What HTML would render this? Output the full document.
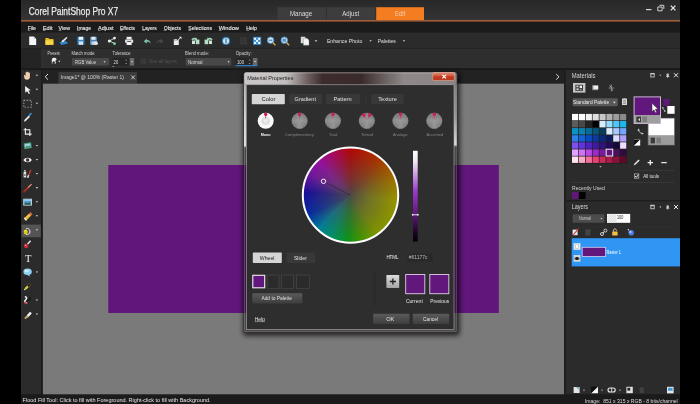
<!DOCTYPE html>
<html><head><meta charset="utf-8"><title>Corel PaintShop Pro X7</title>
<style>
html,body{margin:0;padding:0;background:#000;overflow:hidden}
body{width:700px;height:404px;font-family:"Liberation Sans",sans-serif}
svg{display:block;font-family:"Liberation Sans",sans-serif;filter:blur(.45px);overflow:visible}
text{white-space:pre}
</style></head><body>
<svg width="700" height="404" viewBox="0 0 700 404">
<defs>
<linearGradient id="gTitle" x1="0" y1="0" x2="0" y2="1"><stop offset="0" stop-color="#282828"/><stop offset="1" stop-color="#343434"/></linearGradient>
<linearGradient id="gBtn" x1="0" y1="0" x2="0" y2="1"><stop offset="0" stop-color="#5a5a5a"/><stop offset="1" stop-color="#3e3e3e"/></linearGradient>
<pattern id="chk" width="2.4" height="2.4" patternUnits="userSpaceOnUse"><rect width="2.4" height="2.4" fill="#fff"/><rect width="1.2" height="1.2" fill="#cfcfcf"/><rect x="1.2" y="1.2" width="1.2" height="1.2" fill="#cfcfcf"/></pattern>
<filter id="sh" x="-10%" y="-10%" width="120%" height="120%"><feGaussianBlur stdDeviation="2.5"/></filter>
<linearGradient id="gDT" x1="243.5" y1="0" x2="457.2" y2="0" gradientUnits="userSpaceOnUse"><stop offset="0" stop-color="#cbc7c7"/><stop offset="0.2" stop-color="#c2bebe"/><stop offset="0.3" stop-color="#6e6060"/><stop offset="0.37" stop-color="#3c2c2c"/><stop offset="0.55" stop-color="#3a2a2a"/><stop offset="0.66" stop-color="#6a6060"/><stop offset="0.75" stop-color="#8e8888"/><stop offset="1" stop-color="#8a8484"/></linearGradient>
<linearGradient id="gClose" x1="0" y1="0" x2="0" y2="1"><stop offset="0" stop-color="#e08a70"/><stop offset="0.45" stop-color="#d0553a"/><stop offset="0.5" stop-color="#c23a1e"/><stop offset="1" stop-color="#b83a20"/></linearGradient>
<clipPath id="cpOut"><path clip-rule="evenodd" d="M200 40H500V370H200ZM243.5 72.9H457.2V332.3H243.5Z"/></clipPath>
<linearGradient id="gHL" x1="0" y1="84.8" x2="0" y2="148" gradientUnits="userSpaceOnUse"><stop offset="0" stop-color="#fff" stop-opacity=".55"/><stop offset="0.6" stop-color="#fff" stop-opacity=".75"/><stop offset="0.96" stop-color="#fff" stop-opacity=".8"/><stop offset="1" stop-color="#fff" stop-opacity="0"/></linearGradient>
<linearGradient id="gHR" x1="0" y1="84.8" x2="0" y2="147" gradientUnits="userSpaceOnUse"><stop offset="0" stop-color="#fff" stop-opacity=".3"/><stop offset="0.5" stop-color="#fff" stop-opacity=".42"/><stop offset="0.96" stop-color="#fff" stop-opacity=".8"/><stop offset="1" stop-color="#fff" stop-opacity="0"/></linearGradient>
<radialGradient id="gMono"><stop offset="0" stop-color="#f4f4f4"/><stop offset="0.45" stop-color="#dcdcdc"/><stop offset="0.6" stop-color="#f8f8f8"/><stop offset="1" stop-color="#ffffff"/></radialGradient>
<radialGradient id="gHar"><stop offset="0" stop-color="#9c9c9c"/><stop offset="0.7" stop-color="#888888"/><stop offset="1" stop-color="#7c7c7c"/></radialGradient>
<linearGradient id="gMk" x1="0" y1="0" x2="0" y2="1"><stop offset="0" stop-color="#cc1f58"/><stop offset="0.5" stop-color="#cc1f58" stop-opacity=".8"/><stop offset="1" stop-color="#cc1f58" stop-opacity="0"/></linearGradient>
<linearGradient id="gBr" x1="0" y1="0" x2="0" y2="1"><stop offset="0" stop-color="#ffffff"/><stop offset="0.12" stop-color="#f0e6f6"/><stop offset="0.45" stop-color="#9a38c8"/><stop offset="0.7" stop-color="#61177c"/><stop offset="0.9" stop-color="#1a0624"/><stop offset="1" stop-color="#000000"/></linearGradient>
<linearGradient id="gPlus" x1="0" y1="0" x2="0" y2="1"><stop offset="0" stop-color="#dedede"/><stop offset="1" stop-color="#a4a4a4"/></linearGradient>
</defs>
<rect x="-4.00" y="-4.00" width="708.00" height="412.00" fill="#000" />
<rect x="21.00" y="-4.00" width="659.00" height="24.00" fill="#282828" />
<rect x="21.00" y="0.00" width="659.00" height="20.00" fill="url(#gTitle)" />
<text x="28.70" y="15.00" font-size="10.9" fill="#ececec" textLength="89.50" lengthAdjust="spacingAndGlyphs" stroke="#ececec" stroke-width=".25">Corel PaintShop Pro X7</text>
<rect x="277.50" y="7.20" width="48.30" height="13.00" fill="#3d3d3d" />
<rect x="327.00" y="7.20" width="48.20" height="13.00" fill="#3d3d3d" />
<rect x="376.20" y="7.20" width="47.80" height="13.20" fill="#f47d22" />
<text x="290.00" y="16.26" font-size="6.3" fill="#dcdcdc" textLength="22.20" lengthAdjust="spacingAndGlyphs" >Manage</text>
<text x="342.30" y="16.26" font-size="6.3" fill="#dcdcdc" textLength="16.80" lengthAdjust="spacingAndGlyphs" >Adjust</text>
<text x="395.00" y="16.26" font-size="6.3" fill="#f6d2b4" textLength="10.30" lengthAdjust="spacingAndGlyphs" >Edit</text>
<rect x="21.00" y="20.00" width="659.00" height="1.80" fill="#a05e3a" />
<rect x="646.00" y="9.00" width="5.40" height="1.20" fill="#d8d8d8" />
<path d="M659.5 5.3h4.3v3.6M657.8 7h4.3v3.8h-4.3z" fill="none" stroke="#d0d0d0" stroke-width="1"/>
<path d="M670.8 5.6l4.6 4.8M675.4 5.6l-4.6 4.8" stroke="#e8e8e8" stroke-width="1.3" fill="none"/>
<rect x="21.00" y="21.80" width="659.00" height="10.40" fill="#1b1b1b" />
<text x="27.70" y="29.58" font-size="5.8" fill="#ececec" textLength="8.30" lengthAdjust="spacingAndGlyphs" stroke="#ececec" stroke-width=".12">File</text>
<line x1="27.70" y1="30.40" x2="30.50" y2="30.40" stroke="#cfcfcf" stroke-width="0.55" />
<text x="42.80" y="29.58" font-size="5.8" fill="#ececec" textLength="9.80" lengthAdjust="spacingAndGlyphs" stroke="#ececec" stroke-width=".12">Edit</text>
<line x1="42.80" y1="30.40" x2="45.60" y2="30.40" stroke="#cfcfcf" stroke-width="0.55" />
<text x="58.60" y="29.58" font-size="5.8" fill="#ececec" textLength="11.40" lengthAdjust="spacingAndGlyphs" stroke="#ececec" stroke-width=".12">View</text>
<line x1="58.60" y1="30.40" x2="61.40" y2="30.40" stroke="#cfcfcf" stroke-width="0.55" />
<text x="77.00" y="29.58" font-size="5.8" fill="#ececec" textLength="14.00" lengthAdjust="spacingAndGlyphs" stroke="#ececec" stroke-width=".12">Image</text>
<line x1="77.00" y1="30.40" x2="79.80" y2="30.40" stroke="#cfcfcf" stroke-width="0.55" />
<text x="98.00" y="29.58" font-size="5.8" fill="#ececec" textLength="15.50" lengthAdjust="spacingAndGlyphs" stroke="#ececec" stroke-width=".12">Adjust</text>
<line x1="98.00" y1="30.40" x2="100.80" y2="30.40" stroke="#cfcfcf" stroke-width="0.55" />
<text x="120.00" y="29.58" font-size="5.8" fill="#ececec" textLength="15.00" lengthAdjust="spacingAndGlyphs" stroke="#ececec" stroke-width=".12">Effects</text>
<line x1="120.00" y1="30.40" x2="122.80" y2="30.40" stroke="#cfcfcf" stroke-width="0.55" />
<text x="142.30" y="29.58" font-size="5.8" fill="#ececec" textLength="14.30" lengthAdjust="spacingAndGlyphs" stroke="#ececec" stroke-width=".12">Layers</text>
<line x1="142.30" y1="30.40" x2="145.10" y2="30.40" stroke="#cfcfcf" stroke-width="0.55" />
<text x="163.80" y="29.58" font-size="5.8" fill="#ececec" textLength="17.20" lengthAdjust="spacingAndGlyphs" stroke="#ececec" stroke-width=".12">Objects</text>
<line x1="163.80" y1="30.40" x2="166.60" y2="30.40" stroke="#cfcfcf" stroke-width="0.55" />
<text x="188.30" y="29.58" font-size="5.8" fill="#ececec" textLength="23.70" lengthAdjust="spacingAndGlyphs" stroke="#ececec" stroke-width=".12">Selections</text>
<line x1="188.30" y1="30.40" x2="191.10" y2="30.40" stroke="#cfcfcf" stroke-width="0.55" />
<text x="218.70" y="29.58" font-size="5.8" fill="#ececec" textLength="20.30" lengthAdjust="spacingAndGlyphs" stroke="#ececec" stroke-width=".12">Window</text>
<line x1="218.70" y1="30.40" x2="221.50" y2="30.40" stroke="#cfcfcf" stroke-width="0.55" />
<text x="246.30" y="29.58" font-size="5.8" fill="#ececec" textLength="10.70" lengthAdjust="spacingAndGlyphs" stroke="#ececec" stroke-width=".12">Help</text>
<line x1="246.30" y1="30.40" x2="249.10" y2="30.40" stroke="#cfcfcf" stroke-width="0.55" />
<rect x="21.00" y="32.20" width="659.00" height="16.10" fill="#2b2b2b" />
<rect x="21.00" y="48.30" width="659.00" height="19.70" fill="#242424" />
<rect x="41.60" y="48.30" width="638.40" height="19.70" fill="#2e2e2e" />
<rect x="41.60" y="48.30" width="0.80" height="19.70" fill="#3a3a3a" />
<rect x="21.00" y="47.90" width="659.00" height="0.70" fill="#232323" />
<rect x="21.00" y="68.00" width="659.00" height="1.80" fill="#1c1c1c" />
<rect x="21.00" y="69.80" width="659.00" height="13.80" fill="#222222" />
<rect x="58.40" y="72.00" width="78.60" height="11.60" fill="#3c3c3c" />
<text x="60.60" y="79.22" font-size="6.2" fill="#d8d8d8" textLength="63.40" lengthAdjust="spacingAndGlyphs" >Image1* @ 100% (Raster 1)</text>
<path d="M131.3 75.5l3.6 3.8M134.9 75.5l-3.6 3.8" stroke="#dedede" stroke-width="0.9" fill="none"/>
<path d="M48 74l-2.8 2.8L48 79.6" stroke="#e0e0e0" stroke-width="1" fill="none"/>
<path d="M556.2 74l2.8 2.8l-2.8 2.8" stroke="#e0e0e0" stroke-width="1" fill="none"/>
<rect x="42.60" y="83.60" width="523.40" height="311.00" fill="#7a7a7a" />
<rect x="108.30" y="165.00" width="390.50" height="148.00" fill="#60167b" />
<rect x="21.00" y="394.60" width="659.00" height="13.40" fill="#1b1b1b" />
<text x="22.60" y="402.44" font-size="5.7" fill="#e6e6e6" textLength="188.00" lengthAdjust="spacingAndGlyphs" >Flood Fill Tool: Click to fill with Foreground. Right-click to fill with Background.</text>
<text x="584.90" y="402.51" font-size="5.9" fill="#dcdcdc" textLength="92.80" lengthAdjust="spacingAndGlyphs" >Image:  851 x 315 x RGB - 8 bits/channel</text>
<path d="M29.2 36.6h4.6l2.4 2.4v6h-7z" fill="#f2f4f8"/><path d="M33.8 36.6v2.4h2.4z" fill="#b8c0cc"/>
<path d="M45.4 38h3l.8 1h4.2v5.8h-8z" fill="#e8b820"/><path d="M45.4 40.3h8v4.5h-8z" fill="#f6d648"/>
<path d="M59.5 42.3l6.5-1.2l2 2.4l-6.8 1.4z" fill="#2f86c8"/><path d="M61 41.5l5.5-4.5l1 .8l-4.3 4.4z" fill="#e6eef6"/>
<rect x="77.4" y="36.8" width="7" height="8" rx=".6" fill="#3a86c8"/><rect x="78.8" y="36.8" width="4.2" height="3" fill="#eef4fa"/><rect x="78.8" y="41.4" width="4.2" height="3.4" fill="#d6e4f2"/>
<rect x="90" y="36.8" width="7" height="8" rx=".6" fill="#4a80b4"/><rect x="91.4" y="36.8" width="4.2" height="3" fill="#e4ecf4"/><rect x="91.4" y="41.4" width="4.2" height="3.4" fill="#c6d4e2"/><circle cx="96" cy="43.2" r="1.9" fill="#dfe5ea"/>
<path d="M109.5 40.9l5-2.7M109.5 40.9l5 2.7" stroke="#dfe8e4" stroke-width="0.9" fill="none"/><circle cx="109.3" cy="40.9" r="1.5" fill="#eef2f0"/><circle cx="114.5" cy="38.1" r="1.4" fill="#eef2f0"/><circle cx="114.5" cy="43.7" r="1.4" fill="#7fcfa0"/>
<rect x="126.6" y="36.8" width="5" height="2.6" fill="#f0f0f0"/><rect x="125" y="39.4" width="8.2" height="3.4" rx=".5" fill="#dcdcdc"/><rect x="126.6" y="42" width="5" height="3" fill="#f6f6f6"/><rect x="127.2" y="41" width="3.8" height=".8" fill="#333"/>
<path d="M143.8 41.2l3-2.8v1.7c2.6 0 3.8 1.4 3.8 3.8c-.8-1.6-1.8-2.1-3.8-2.1v1.9z" fill="#7fc4a4"/>
<path d="M163.4 41.2l-3-2.8v1.7c-2.6 0-3.8 1.4-3.8 3.8c.8-1.6 1.8-2.1 3.8-2.1v1.9z" fill="#444a47"/>
<rect x="173.8" y="40.2" width="5" height="4.8" fill="#eaeaea"/><path d="M177.6 40.6l3.6-3.6" stroke="#e8e8e8" stroke-width="1"/><path d="M179 36.8h2.4v2.4z" fill="#f0f0f0"/><rect x="173.8" y="39" width="3.4" height="1.2" fill="#bbb"/>
<path d="M191.4 39.5c1-1.6 3-2.2 4.4-1.2l.5-1l1 3l-3 .4l.7-1c-.9-.5-1.8-.2-2.4.7z" fill="#9fd8b8"/><rect x="192" y="40.6" width="3.2" height="3.4" fill="#cfe6da"/><rect x="196" y="39.6" width="3.4" height="4.6" fill="#b8dcc8"/>
<path d="M212.6 39.5c-1-1.6-3-2.2-4.4-1.2l-.5-1l-1 3l3 .4l-.7-1c.9-.5 1.8-.2 2.4.7z" fill="#9fd8b8"/><rect x="208.8" y="40.6" width="3.2" height="3.4" fill="#cfe6da"/><rect x="204.6" y="39.6" width="3.4" height="4.6" fill="#b8dcc8"/>
<circle cx="226" cy="40.9" r="4.1" fill="#2f7fb8"/><circle cx="226" cy="40.9" r="3" fill="#d4e6f2"/><rect x="225.4" y="38.6" width="1.2" height="4.6" fill="#2a6a9a"/>
<rect x="240.3" y="37.4" width="6.6" height="7" fill="#3e3e3e"/><path d="M240.3 39.8h6.6M240.3 42h6.6M242.5 37.4v7M244.7 37.4v7" stroke="#2c2c2c" stroke-width=".6"/>
<rect x="253" y="36.8" width="8.2" height="8.1" fill="#2f88cc"/><rect x="254" y="37.8" width="6.2" height="6.1" fill="#f2f6fa"/><rect x="256" y="37.8" width="2.1" height="2" fill="#3a8ccc"/><rect x="254" y="39.8" width="2" height="2.1" fill="#3a8ccc"/><rect x="258.1" y="39.8" width="2.1" height="2.1" fill="#3a8ccc"/><rect x="256" y="41.9" width="2.1" height="2" fill="#3a8ccc"/>
<path d="M272.8 42.6l2.6 2.6" stroke="#d8b040" stroke-width="1.4"/>
<circle cx="270.6" cy="40.2" r="3.3" fill="#cfe2f0" stroke="#3a86c0" stroke-width="0.9"/>
<rect x="268.8" y="39.7" width="3.6" height="1" fill="#2c6ea6"/>
<path d="M286.5 42.6l2.6 2.6" stroke="#d8b040" stroke-width="1.4"/>
<circle cx="284.3" cy="40.2" r="3.3" fill="#cfe2f0" stroke="#3a86c0" stroke-width="0.9"/>
<rect x="282.5" y="39.7" width="3.6" height="1" fill="#2c6ea6"/>
<rect x="282.7" y="38.6" width="3.2" height="3.2" fill="#5a92c0"/>
<path d="M300.8 36.8h4l1.4 1.4v5h-5.4z" fill="#dcdcdc"/><path d="M303.4 38.6h4l1.6 1.6v5h-5.6z" fill="#f4f4f4" stroke="#888" stroke-width=".4"/>
<path d="M314.70 40.22L317.30 40.22L316.00 41.91Z" fill="#d0d0d0"/>
<text x="326.90" y="42.85" font-size="6" fill="#e0e0e0" textLength="35.40" lengthAdjust="spacingAndGlyphs" >Enhance Photo</text>
<path d="M369.40 40.28L371.80 40.28L370.60 41.84Z" fill="#d0d0d0"/>
<text x="377.80" y="42.85" font-size="6" fill="#e0e0e0" textLength="18.00" lengthAdjust="spacingAndGlyphs" >Palettes</text>
<path d="M402.80 40.28L405.20 40.28L404.00 41.84Z" fill="#d0d0d0"/>
<text x="47.40" y="54.90" font-size="5.3" fill="#d6d6d6" textLength="13.20" lengthAdjust="spacingAndGlyphs" >Presets:</text>
<text x="71.50" y="54.90" font-size="5.3" fill="#d6d6d6" textLength="24.00" lengthAdjust="spacingAndGlyphs" >Match mode:</text>
<text x="112.60" y="54.90" font-size="5.3" fill="#d6d6d6" textLength="18.90" lengthAdjust="spacingAndGlyphs" >Tolerance:</text>
<text x="185.00" y="54.90" font-size="5.3" fill="#d6d6d6" textLength="24.00" lengthAdjust="spacingAndGlyphs" >Blend mode:</text>
<text x="235.70" y="54.90" font-size="5.3" fill="#d6d6d6" textLength="16.00" lengthAdjust="spacingAndGlyphs" >Opacity:</text>
<path d="M51.8 63.6v-4.2c0-1.6 3.6-2.4 4.6-.6c.5 1-.3 1.8-1.2 1.9l.9 2.6l-1.5 .4l-.6-2.2l-.8 0v2z" fill="#ececec"/><circle cx="53.6" cy="62.6" r="1.2" fill="#2e2e2e"/>
<path d="M58.20 60.84L60.40 60.84L59.30 62.27Z" fill="#e0e0e0"/>
<rect x="72.00" y="58.00" width="37.00" height="7.60" fill="#484848" rx="0.8"/>
<text x="75.00" y="63.70" font-size="5.3" fill="#dcdcdc" textLength="21.00" lengthAdjust="spacingAndGlyphs" >RGB Value</text>
<path d="M103.50 61.24L105.70 61.24L104.60 62.67Z" fill="#e0e0e0"/>
<rect x="112.60" y="58.00" width="16.40" height="7.60" fill="#262626" />
<text x="113.60" y="63.50" font-size="5.3" fill="#e0e0e0" textLength="4.60" lengthAdjust="spacingAndGlyphs" >20</text>
<path d="M125.2 60.4l1-1.2l1 1.2zM125.2 63l1 1.2l1-1.2z" fill="#9a9a9a"/>
<rect x="129.80" y="58.00" width="4.40" height="7.60" fill="#6a6a6a" />
<path d="M131.00 61.30L133.00 61.30L132.00 62.60Z" fill="#f0f0f0"/>
<rect x="112.60" y="66.00" width="1.40" height="0.80" fill="#b0b0b0" />
<rect x="140.30" y="58.60" width="6.00" height="5.20" fill="#3a3a3a" />
<text x="149.00" y="63.30" font-size="5.3" fill="#565656" textLength="27.70" lengthAdjust="spacingAndGlyphs" >Use all layers</text>
<rect x="185.70" y="58.00" width="45.50" height="7.60" fill="#484848" rx="0.8"/>
<text x="188.00" y="63.70" font-size="5.3" fill="#dcdcdc" textLength="14.60" lengthAdjust="spacingAndGlyphs" >Normal</text>
<path d="M227.50 61.24L229.70 61.24L228.60 62.67Z" fill="#e0e0e0"/>
<rect x="235.70" y="58.00" width="16.50" height="7.00" fill="#262626" />
<text x="237.00" y="63.50" font-size="5.3" fill="#e0e0e0" textLength="7.00" lengthAdjust="spacingAndGlyphs" >100</text>
<path d="M248.6 60.4l1-1.2l1 1.2zM248.6 63l1 1.2l1-1.2z" fill="#9a9a9a"/>
<rect x="252.80" y="58.00" width="4.60" height="7.00" fill="#6a6a6a" />
<path d="M254.10 61.00L256.10 61.00L255.10 62.30Z" fill="#f0f0f0"/>
<rect x="235.70" y="65.00" width="21.70" height="1.20" fill="#2f7fd0" />
<rect x="21.00" y="69.80" width="20.20" height="324.80" fill="#2b2b2b" />
<rect x="41.20" y="69.80" width="1.40" height="324.80" fill="#1e1e1e" />
<rect x="21.60" y="224.60" width="19.20" height="12.60" fill="#555555" />
<path d="M35.70 74.68L38.10 74.68L36.90 76.24Z" fill="#d8d8d8"/>
<path d="M35.70 88.73L38.10 88.73L36.90 90.29Z" fill="#d8d8d8"/>
<path d="M35.70 102.78L38.10 102.78L36.90 104.34Z" fill="#d8d8d8"/>
<path d="M35.70 144.93L38.10 144.93L36.90 146.49Z" fill="#d8d8d8"/>
<path d="M35.70 158.98L38.10 158.98L36.90 160.54Z" fill="#d8d8d8"/>
<path d="M35.70 173.03L38.10 173.03L36.90 174.59Z" fill="#d8d8d8"/>
<path d="M35.70 187.08L38.10 187.08L36.90 188.64Z" fill="#d8d8d8"/>
<path d="M35.70 201.13L38.10 201.13L36.90 202.69Z" fill="#d8d8d8"/>
<path d="M35.70 215.18L38.10 215.18L36.90 216.74Z" fill="#d8d8d8"/>
<path d="M35.70 229.23L38.10 229.23L36.90 230.79Z" fill="#d8d8d8"/>
<path d="M35.70 271.38L38.10 271.38L36.90 272.94Z" fill="#d8d8d8"/>
<path d="M35.70 299.48L38.10 299.48L36.90 301.04Z" fill="#d8d8d8"/>
<path d="M35.70 313.53L38.10 313.53L36.90 315.09Z" fill="#d8d8d8"/>
<g transform="translate(27.60 75.70)"><path d="M-3.4 .6c-.8-1 0-1.700 .8-1l.6 .6v-3.200c0-.8 1.100-.8 1.100 0v-.6c0-.8 1.100-.8 1.100 0v.4c0-.7 1.100-.7 1.100 0v.7c0-.6 1-.6 1 0v3.600c0 2-1.200 3-3 3c-1.500 0-2.200-1-2.700-2z" fill="#f0cfb4"/></g>
<g transform="translate(27.60 89.75)"><path d="M-2.600 -3.800l5.800 4.200l-2.400 .4l1.600 2.800l-1.200 .7l-1.600 -2.900l-1.900 1.500z" fill="#f4f4f4"/></g>
<g transform="translate(27.60 103.80)"><rect x="-3.800" y="-3.400" width="7.600" height="6.800" fill="none" stroke="#8a8a8a" stroke-width="1.100" stroke-dasharray="1.600 1.200"/></g>
<g transform="translate(27.60 117.85)"><path d="M-3.600 3.800l.6 -1.800l4.200 -4.400l1.200 1.200l-4.200 4.400z" fill="#e8f0f6"/><path d="M.8 -2.800l2 -2c.8 -.6 1.800 .4 1.200 1.200l-2 2z" fill="#3a8ed0"/></g>
<g transform="translate(27.60 131.90)"><path d="M-2.200 -4v6.200h6.200M-4 -2.200h6.200v6.200" fill="none" stroke="#f0f0f0" stroke-width="1.100"/></g>
<g transform="translate(27.60 145.95)"><path d="M-4 -2.600l7.400 -1.200l.8 5.800l-7.400 1.200z" fill="#3d9a7a"/><path d="M-3 -1.800l5.600 -.9l.5 3.800l-5.600 .9z" fill="#9fd0e8"/><path d="M-2.600 1.800l2 -2.200l1.400 1.200l1.200 -1.400l1 2z" fill="#3a8a4a"/></g>
<g transform="translate(27.60 160.00)"><path d="M-4.200 0c1.800 -3 6.600 -3 8.400 0c-1.800 3 -6.600 3 -8.400 0z" fill="#f2f2f2"/><circle cx="0" cy="0" r="1.700" fill="#2a2a2a"/><circle cx="0" cy="0" r=".8" fill="#a02020"/></g>
<g transform="translate(27.60 174.05)"><rect x="-4" y="-2.200" width="2.600" height="5.600" fill="#dfe9e4"/><rect x="-3.600" y="-4" width="1.800" height="1.600" fill="#bbb"/><circle cx="-2.700" cy="1" r=".8" fill="#222"/><path d="M0 3.600l3.200 -7.600" stroke="#d84030" stroke-width="1.200"/><path d="M0 3.600l1 -2.400" stroke="#eee" stroke-width="1.400"/></g>
<g transform="translate(27.60 188.10)"><path d="M-4 4l5 -5" stroke="#c03020" stroke-width="1.600"/><path d="M.6 -.6l3.400 -3.400" stroke="#e8a080" stroke-width="1.100"/><path d="M-4.200 4.200l1.600 -.4" stroke="#802010" stroke-width="1"/></g>
<g transform="translate(27.60 202.15)"><rect x="-4.300" y="-3.400" width="8.600" height="6.800" fill="#dfe8ee"/><rect x="-3.500" y="-2.600" width="7" height="5.200" fill="#4a9ad0"/><path d="M-3.500 2.600l2 -2.600l1.600 1.400l1.400 -1.600l2 2.800z" fill="#2c5f3a"/><rect x="-3.500" y="-2.600" width="7" height="1.600" fill="#8cc8ee"/></g>
<g transform="translate(27.60 216.20)"><path d="M-3.800 2.400l5.200 -5.200l2.200 2.200l-5.200 5.200z" fill="#e8c040"/><path d="M1.400 -2.800l1.400 -1.400l2.200 2.200l-1.400 1.400z" fill="#e06a50"/><path d="M-3.800 2.400l1 -1l2.200 2.200l-1 1z" fill="#f4e6c0"/></g>
<g transform="translate(27.60 230.25)"><path d="M-1.500 -1.500a3 3 0 1 1 1.500 5.800a3 3 0 0 1 -2.600 -4.400" fill="none" stroke="#e8e8e8" stroke-width="1"/><path d="M-3.800 1.200c0 -2 3.600 -2.400 3.800 0c.1 1.800 -.8 3 -2 3s-1.800 -1.400 -1.800 -3z" fill="#f2e020"/><circle cx="-2" cy="2.200" r="1.200" fill="#d8c000"/></g>
<g transform="translate(27.60 244.30)"><circle cx="-1.400" cy="1.600" r="2.300" fill="#c8283a"/><path d="M0 -.4l3 -3.200" stroke="#e8e8e8" stroke-width="1.400"/><circle cx="-2" cy="1" r=".7" fill="#f0a0a8"/></g>
<text x="28.20" y="261.95" font-size="10.5" font-family="Liberation Serif,serif" text-anchor="middle" fill="#f0f0f0">T</text>
<g transform="translate(27.60 272.40)"><ellipse cx="0" cy="-.6" rx="4.200" ry="3.300" fill="#8fd0f0"/><path d="M-.5 2l2.600 2.400l-.4 -2.800z" fill="#8fd0f0"/><ellipse cx="-.8" cy="-1.400" rx="2.200" ry="1.300" fill="#c8eafa"/></g>
<g transform="translate(27.60 286.45)"><path d="M-3.600 3.800l1 -2.600l4.200 -4.200l1.600 1.600l-4.200 4.200z" fill="#d8d040"/><path d="M-.4 -.8l2 -2.200l1.600 1.600l-2.200 2z" fill="#1a1a1a"/><path d="M-3.600 3.800l.5 -1.400l.9 .9z" fill="#eee"/></g>
<g transform="translate(27.60 300.50)"><path d="M-2.800 -3.800c2.400 0 2.200 2.200 .8 3.200c-1.600 1.200 -.6 3.400 1.600 2.800" fill="none" stroke="#f0f0f0" stroke-width="1.500"/><path d="M-.4 .6l3.800 -3.600" stroke="#1a1a1a" stroke-width="1.800"/><circle cx="-2" cy="2.600" r="1.200" fill="#d03040"/></g>
<g transform="translate(27.60 314.55)"><path d="M-.8 .8l3.200 -3.600l1.800 1.600l-3.200 3.600z" fill="#f2f2f2"/><path d="M-3.600 3.800l2.800 -3l1.800 1.600l-3 2z" fill="#c8b070"/><path d="M-4 4.200l1.400 -.2" stroke="#444" stroke-width=".8"/></g>
<rect x="564.00" y="69.80" width="116.00" height="324.80" fill="#2b2b2b" />
<rect x="564.00" y="69.80" width="1.60" height="324.80" fill="#1c1c1c" />
<text x="571.70" y="77.78" font-size="7.2" fill="#d4d4d4" textLength="23.80" lengthAdjust="spacingAndGlyphs" >Materials</text>
<rect x="650.8" y="73.40" width="3.4" height="3.6" fill="none" stroke="#d8d8d8" stroke-width=".8"/><rect x="650.8" y="73.40" width="3.4" height="1" fill="#d8d8d8"/>
<path d="M659.30 74.80L661.30 74.80L660.30 76.10Z" fill="#d0d0d0"/>
<rect x="666.6" y="73.60" width="2.200" height="2.600" fill="#cfcfcf"/><rect x="666" y="76.00" width="3.400" height=".8" fill="#cfcfcf"/><rect x="667.4" y="76.60" width=".7" height="1.400" fill="#cfcfcf"/>
<path d="M674 73.20l4 4M678 73.20l-4 4" stroke="#e4e4e4" stroke-width="1" fill="none"/>
<rect x="573.00" y="83.00" width="12.40" height="9.60" fill="#c4c4c4" />
<rect x="575.400" y="84.800" width="7.600" height="6" fill="#3a3a3a"/><rect x="576.400" y="85.600" width="2" height="1.600" fill="#ddd"/><rect x="579.600" y="85.600" width="2.400" height="2.400" fill="#eee"/><rect x="576.400" y="88.400" width="2.400" height="1.600" fill="#ccc"/><rect x="580" y="88.800" width="1.600" height="1.200" fill="#999"/>
<rect x="592.200" y="85" width="6" height="5.200" fill="#8a8a8a"/><rect x="593.400" y="85.800" width="4.800" height="3.400" fill="#f0f0f0"/>
<path d="M611.300 84.400v7M608.600 88h5.600" stroke="#9a9a9a" stroke-width=".8"/><path d="M609.600 85.600l1.600 1.400M613 90.400l-1.400-1.200" stroke="#ddd" stroke-width=".8"/>
<rect x="572.60" y="98.20" width="45.20" height="8.00" fill="#585858" rx=".8"/>
<text x="572.90" y="104.42" font-size="6.2" fill="#ececec" textLength="36.20" lengthAdjust="spacingAndGlyphs" >Standard Palette</text>
<path d="M613.10 101.82L615.70 101.82L614.40 103.51Z" fill="#f0f0f0"/>
<rect x="622" y="98.600" width="5" height="6.400" fill="#d8d8d8"/><rect x="623.400" y="98" width="2.200" height="1.400" fill="#aaa"/><path d="M623 100.600h3M623 102h3M623 103.400h3" stroke="#555" stroke-width=".5"/>
<rect x="571.50" y="113.40" width="55.76" height="50.50" fill="#222" />
<rect x="572.00" y="113.90" width="6.17" height="6.40" fill="#ffffff" />
<rect x="578.87" y="113.90" width="6.17" height="6.40" fill="#fbfbfb" />
<rect x="585.74" y="113.90" width="6.17" height="6.40" fill="#f0f0f0" />
<rect x="592.61" y="113.90" width="6.17" height="6.40" fill="#dedede" />
<rect x="599.48" y="113.90" width="6.17" height="6.40" fill="#c6c6c6" />
<rect x="606.35" y="113.90" width="6.17" height="6.40" fill="#b0b0b0" />
<rect x="613.22" y="113.90" width="6.17" height="6.40" fill="#9c9c9c" />
<rect x="620.09" y="113.90" width="6.17" height="6.40" fill="#8a8a8a" />
<rect x="572.00" y="121.00" width="6.17" height="6.40" fill="#5c5c5c" />
<rect x="578.87" y="121.00" width="6.17" height="6.40" fill="#484848" />
<rect x="585.74" y="121.00" width="6.17" height="6.40" fill="#222222" />
<rect x="592.61" y="121.00" width="6.17" height="6.40" fill="#000000" />
<rect x="599.48" y="121.00" width="6.17" height="6.40" fill="#d6eeff" />
<rect x="606.35" y="121.00" width="6.17" height="6.40" fill="#96dcff" />
<rect x="613.22" y="121.00" width="6.17" height="6.40" fill="#50c6f6" />
<rect x="620.09" y="121.00" width="6.17" height="6.40" fill="#1cb6ee" />
<rect x="572.00" y="128.10" width="6.17" height="6.40" fill="#0c94c6" />
<rect x="578.87" y="128.10" width="6.17" height="6.40" fill="#0a82b2" />
<rect x="585.74" y="128.10" width="6.17" height="6.40" fill="#086c9a" />
<rect x="592.61" y="128.10" width="6.17" height="6.40" fill="#08547a" />
<rect x="599.48" y="128.10" width="6.17" height="6.40" fill="#083e5c" />
<rect x="606.35" y="128.10" width="6.17" height="6.40" fill="#dcecff" />
<rect x="613.22" y="128.10" width="6.17" height="6.40" fill="#a6c8ff" />
<rect x="620.09" y="128.10" width="6.17" height="6.40" fill="#70a6fc" />
<rect x="572.00" y="135.20" width="6.17" height="6.40" fill="#2f80e8" />
<rect x="578.87" y="135.20" width="6.17" height="6.40" fill="#1262da" />
<rect x="585.74" y="135.20" width="6.17" height="6.40" fill="#0a4ac2" />
<rect x="592.61" y="135.20" width="6.17" height="6.40" fill="#083aa2" />
<rect x="599.48" y="135.20" width="6.17" height="6.40" fill="#0a2a7c" />
<rect x="606.35" y="135.20" width="6.17" height="6.40" fill="#0a1a5a" />
<rect x="613.22" y="135.20" width="6.17" height="6.40" fill="#dcdcff" />
<rect x="620.09" y="135.20" width="6.17" height="6.40" fill="#b0a0fc" />
<rect x="572.00" y="142.30" width="6.17" height="6.40" fill="#7e50f0" />
<rect x="578.87" y="142.30" width="6.17" height="6.40" fill="#6032e0" />
<rect x="585.74" y="142.30" width="6.17" height="6.40" fill="#5022c2" />
<rect x="592.61" y="142.30" width="6.17" height="6.40" fill="#401aa2" />
<rect x="599.48" y="142.30" width="6.17" height="6.40" fill="#30127a" />
<rect x="606.35" y="142.30" width="6.17" height="6.40" fill="#220a5a" />
<rect x="613.22" y="142.30" width="6.17" height="6.40" fill="#14083a" />
<rect x="620.09" y="142.30" width="6.17" height="6.40" fill="#f0dcff" />
<rect x="572.00" y="149.40" width="6.17" height="6.40" fill="#e2a2ff" />
<rect x="578.87" y="149.40" width="6.17" height="6.40" fill="#d272f8" />
<rect x="585.74" y="149.40" width="6.17" height="6.40" fill="#ba4ae8" />
<rect x="592.61" y="149.40" width="6.17" height="6.40" fill="#9a2aca" />
<rect x="599.48" y="149.40" width="6.17" height="6.40" fill="#7a1aa2" />
<rect x="606.35" y="149.40" width="6.17" height="6.40" fill="#61177c" />
<rect x="613.22" y="149.40" width="6.17" height="6.40" fill="#4a1060" />
<rect x="620.09" y="149.40" width="6.17" height="6.40" fill="#320a42" />
<rect x="572.00" y="156.50" width="6.17" height="6.40" fill="#ffe2f0" />
<rect x="578.87" y="156.50" width="6.17" height="6.40" fill="#f8aac8" />
<rect x="585.74" y="156.50" width="6.17" height="6.40" fill="#f0729a" />
<rect x="592.61" y="156.50" width="6.17" height="6.40" fill="#e84272" />
<rect x="599.48" y="156.50" width="6.17" height="6.40" fill="#ca2a5a" />
<rect x="606.35" y="156.50" width="6.17" height="6.40" fill="#aa1a4a" />
<rect x="613.22" y="156.50" width="6.17" height="6.40" fill="#8a123a" />
<rect x="620.09" y="156.50" width="6.17" height="6.40" fill="#62082a" />
<rect x="606.15" y="149.20" width="6.57" height="6.80" fill="#61177c" stroke="#f4eef6" stroke-width="1"/>
<path d="M599.40 166.14L601.60 166.14L600.50 167.57Z" fill="#e0e0e0"/>
<rect x="647.60" y="117.80" width="27.40" height="27.80" fill="#555" />
<rect x="648.40" y="118.40" width="25.80" height="17.20" fill="#ffffff" />
<rect x="648.40" y="135.60" width="25.80" height="9.30" fill="#9c9c9c" />
<rect x="650.60" y="137.60" width="4.40" height="5.80" fill="#3c3c3c" />
<rect x="656.40" y="137.60" width="4.60" height="5.80" fill="#7e7e7e" />
<rect x="663.40" y="99.00" width="6.00" height="6.70" fill="#61177c" />
<rect x="667.30" y="106.00" width="7.30" height="7.80" fill="#ffffff" />
<path d="M662.600 107.800l2.400 3.400" stroke="#ddd" stroke-width=".7"/><path d="M662 107.200l2 .4l-1.400 1.200zM665.600 111.800l-2-.4l1.400-1.200z" fill="#ddd"/>
<rect x="633.60" y="96.40" width="27.40" height="27.60" fill="#c9b8d2" />
<rect x="634.60" y="97.40" width="25.40" height="17.80" fill="#61177c" />
<rect x="634.60" y="115.20" width="25.40" height="8.00" fill="#9e9e9e" />
<rect x="636.40" y="116.60" width="4.60" height="5.60" fill="#3c3c3c" />
<rect x="642.40" y="116.60" width="4.60" height="5.60" fill="#7e7e7e" />
<path d="M638.200 119.600l1.800 1.600v-3.200z" fill="#ddd"/>
<path d="M652 103.200v8.400l2-1.800l1.400 3l1.300-.6l-1.400-2.900l2.600-.2z" fill="#fff" stroke="#333" stroke-width=".5"/>
<path d="M638.600 129.400c.2 2.600 1.600 4 4.200 4.200" fill="none" stroke="#cfd8dc" stroke-width=".8"/><path d="M637.400 130.400l1.200-2l1.200 2zM641.800 132.400l2 1.200l-2 1.200z" fill="#cfd8dc"/>
<rect x="634.00" y="139.40" width="6.20" height="6.20" fill="#ffffff" />
<path d="M634 139.400h6.200l-6.200 6.200z" fill="#111"/>
<path d="M633.600 165.600l1-2l4-4.200l1 1l-4 4.200z" fill="#f0f0f0"/>
<path d="M647.600 162.600h5.400M650.300 159.900v5.400" stroke="#f0f0f0" stroke-width="1.300"/>
<path d="M661.200 162.600h5.600" stroke="#e0e0e0" stroke-width="1.300"/>
<line x1="634.00" y1="170.40" x2="674.00" y2="170.40" stroke="#3c3c3c" stroke-width="0.8" />
<rect x="634.40" y="173.90" width="4.40" height="4.30" fill="#2b2b2b" stroke="#bdbdbd" stroke-width=".7"/>
<path d="M635.200 176l1.200 1.300l2-2.600" stroke="#fff" stroke-width=".9" fill="none"/>
<text x="643.20" y="178.20" font-size="5.6" fill="#e0e0e0" textLength="15.80" lengthAdjust="spacingAndGlyphs" >All tools</text>
<line x1="572.00" y1="182.40" x2="674.00" y2="182.40" stroke="#3c3c3c" stroke-width="0.8" />
<text x="572.00" y="189.82" font-size="6.2" fill="#d8d8d8" textLength="32.80" lengthAdjust="spacingAndGlyphs" >Recently Used</text>
<rect x="572.00" y="192.00" width="6.80" height="7.00" fill="#61177c" />
<rect x="578.80" y="192.00" width="6.80" height="7.00" fill="#000" />
<rect x="566.60" y="200.20" width="113.40" height="1.20" fill="#1c1c1c" />
<text x="571.70" y="209.32" font-size="7.6" fill="#d8d8d8" textLength="16.40" lengthAdjust="spacingAndGlyphs" >Layers</text>
<rect x="650.8" y="205.20" width="3.4" height="3.6" fill="none" stroke="#d8d8d8" stroke-width=".8"/><rect x="650.8" y="205.20" width="3.4" height="1" fill="#d8d8d8"/>
<path d="M659.30 206.60L661.30 206.60L660.30 207.90Z" fill="#d0d0d0"/>
<rect x="666.6" y="205.40" width="2.200" height="2.600" fill="#cfcfcf"/><rect x="666" y="207.80" width="3.400" height=".8" fill="#cfcfcf"/><rect x="667.4" y="208.40" width=".7" height="1.400" fill="#cfcfcf"/>
<path d="M674 205.00l4 4M678 205.00l-4 4" stroke="#e4e4e4" stroke-width="1" fill="none"/>
<rect x="572.60" y="214.20" width="31.80" height="8.60" fill="#4c4c4c" rx=".8"/>
<text x="579.00" y="220.36" font-size="5.2" fill="#d0d0d0" textLength="12.00" lengthAdjust="spacingAndGlyphs" >Normal</text>
<path d="M600.40 218.00L602.40 218.00L601.40 219.30Z" fill="#d8d8d8"/>
<rect x="607.00" y="213.90" width="23.20" height="8.90" fill="#ffffff" />
<rect x="607.40" y="214.30" width="9.10" height="8.10" fill="url(#chk)" />
<text x="617.00" y="218.66" font-size="5.2" fill="#222" textLength="6.20" lengthAdjust="spacingAndGlyphs" >100</text>
<line x1="572.00" y1="227.00" x2="674.00" y2="227.00" stroke="#333" stroke-width="0.6" />
<rect x="572.600" y="229.600" width="5" height="5.600" fill="#e8e8e8"/><path d="M573.200 235l5.400-6.400" stroke="#d03030" stroke-width="1.100"/>
<rect x="585.400" y="229.200" width="5" height="6.400" fill="#444"/>
<circle cx="602" cy="234" r="1.500" fill="none" stroke="#e0e0e0" stroke-width=".9"/><circle cx="605.400" cy="230.600" r="1.500" fill="none" stroke="#e0e0e0" stroke-width=".9"/><path d="M603 233l1.400-1.400" stroke="#e0e0e0" stroke-width=".9"/>
<rect x="612.200" y="231.600" width="5.400" height="4" rx=".5" fill="#f0c040"/><path d="M613.400 231.600v-1.200c0-2 3-2 3 0v.4" fill="none" stroke="#e8e0c0" stroke-width=".9"/>
<circle cx="631.200" cy="232.800" r="2.800" fill="#4a7ae0"/><circle cx="630.400" cy="232" r="1.200" fill="#a8c4f8"/><circle cx="628.400" cy="229.800" r=".8" fill="#e8e8e8"/>
<rect x="571.70" y="238.20" width="108.30" height="28.20" fill="#2f96f4" />
<rect x="573.60" y="243.20" width="6.80" height="6.60" fill="#e8eef2" />
<path d="M575.400 244.200h3v4.400h-3z" fill="#fff" stroke="#888" stroke-width=".4"/>
<rect x="573.60" y="255.00" width="6.80" height="6.80" fill="#d0d4d6" />
<path d="M574.400 258.400c1.400-2 3.800-2 5.200 0c-1.400 2-3.800 2-5.200 0z" fill="#3a3020"/><circle cx="577" cy="258.400" r=".9" fill="#111"/>
<rect x="582.20" y="247.30" width="23.40" height="9.10" fill="#61177c" stroke="#d8c8f0" stroke-width=".8"/>
<text x="606.60" y="253.79" font-size="5" fill="#ffffff" textLength="14.40" lengthAdjust="spacingAndGlyphs" >Raster 1</text>
<rect x="573.600" y="387" width="6" height="6" fill="#dfe6ea"/><path d="M576 387h3.600v3.600z" fill="#8aa"/>
<path d="M583.00 389.80L585.00 389.80L584.00 391.10Z" fill="#d0d0d0"/>
<path d="M591 393.200L598 386.400V393.200Z" fill="#f4f4f4"/><path d="M591 393.200V386.400H598Z" fill="#111"/>
<path d="M601.00 389.80L603.00 389.80L602.00 391.10Z" fill="#d0d0d0"/>
<rect x="608" y="388" width="7.200" height="4" rx="2" fill="none" stroke="#f0f0f0" stroke-width="1.100"/><path d="M611.600 388v4" stroke="#f0f0f0" stroke-width=".8"/>
<path d="M619.00 389.80L621.00 389.80L620.00 391.10Z" fill="#d0d0d0"/>
<rect x="626.400" y="386.800" width="6.400" height="6.400" fill="#e0e0e0"/><rect x="627.400" y="387.800" width="2.800" height="2.800" fill="#222"/>
<rect x="639.600" y="387.400" width="4.200" height="5.600" fill="#414141"/>
<rect x="667" y="386.800" width="6.600" height="6.600" fill="#dfe8ee"/><rect x="668" y="387.800" width="4.600" height="3" fill="#4a9ad0"/>
<g clip-path="url(#cpOut)"><rect x="243.0" y="72.4" width="216.7" height="263.4" rx="3" fill="#000" opacity=".7" filter="url(#sh)"/></g>
<path d="M243.5 84.800V74.30000000000001a2.400 2.400 0 0 1 2.400 -2.400H454.8a2.400 2.400 0 0 1 2.400 2.400V84.800z" fill="#4a4448"/>
<path d="M244.2 84.800V74.5a1.900 1.900 0 0 1 1.900 -1.900H454.59999999999997a1.900 1.900 0 0 1 1.900 1.900V84.800z" fill="url(#gDT)"/>
<line x1="245.50" y1="72.90" x2="455.20" y2="72.90" stroke="#e8e4e4" stroke-width="0.6" opacity=".7"/>
<rect x="243.50" y="84.80" width="2.80" height="247.50" fill="rgba(30,24,32,.52)" />
<rect x="454.00" y="84.80" width="3.20" height="247.50" fill="rgba(30,24,32,.52)" />
<rect x="246.30" y="329.50" width="207.70" height="2.80" fill="rgba(30,24,32,.52)" />
<line x1="244.40" y1="84.80" x2="244.40" y2="331.40" stroke="#ffffff" stroke-width="0.6" opacity=".38"/>
<line x1="456.30" y1="84.80" x2="456.30" y2="331.40" stroke="#ffffff" stroke-width="0.6" opacity=".38"/>
<line x1="244.40" y1="331.40" x2="456.30" y2="331.40" stroke="#ffffff" stroke-width="0.6" opacity=".38"/>
<path d="M243.7 84.800V332.1H457.0V84.800" fill="none" stroke="#1e1a1e" stroke-width=".5" opacity=".8"/>
<rect x="244.00" y="84.80" width="2.30" height="63.20" fill="url(#gHL)" />
<rect x="454.00" y="84.80" width="2.70" height="62.20" fill="url(#gHR)" />
<rect x="246.30" y="84.80" width="207.70" height="244.70" fill="#2e2e2e" stroke="#b8b0b6" stroke-width=".55"/>
<text x="247.20" y="80.41" font-size="5.9" fill="#1c1c1c" textLength="46.20" lengthAdjust="spacingAndGlyphs" >Material Properties</text>
<rect x="432.800" y="72.600" width="21.600" height="8" rx="1.200" fill="url(#gClose)" stroke="#e8c0b0" stroke-width=".5"/>
<path d="M442.400 74.800l3.600 3.600M446 74.800l-3.600 3.600" stroke="#fff" stroke-width="1.200"/>
<rect x="251.80" y="93.90" width="33.00" height="10.40" fill="#d6d6d6" rx=".8"/>
<text x="261.60" y="101.42" font-size="6.2" fill="#1a1a1a" textLength="13.80" lengthAdjust="spacingAndGlyphs" >Color</text>
<rect x="289.00" y="93.90" width="32.90" height="10.40" fill="#383838" rx=".8"/>
<text x="294.60" y="101.42" font-size="6.2" fill="#e2e2e2" textLength="21.40" lengthAdjust="spacingAndGlyphs" >Gradient</text>
<rect x="326.00" y="93.90" width="34.00" height="10.40" fill="#383838" rx=".8"/>
<text x="333.40" y="101.42" font-size="6.2" fill="#e2e2e2" textLength="18.20" lengthAdjust="spacingAndGlyphs" >Pattern</text>
<line x1="365.80" y1="94.50" x2="365.80" y2="104.00" stroke="#3a3a3a" stroke-width="0.7" />
<rect x="371.30" y="93.90" width="32.30" height="10.40" fill="#383838" rx=".8"/>
<text x="378.20" y="101.42" font-size="6.2" fill="#e2e2e2" textLength="18.60" lengthAdjust="spacingAndGlyphs" >Texture</text>
<circle cx="265.7" cy="120.8" r="8" fill="url(#gMono)"/>
<circle cx="299.6" cy="120.8" r="8" fill="url(#gHar)"/>
<circle cx="332.9" cy="120.8" r="8" fill="url(#gHar)"/>
<circle cx="366.8" cy="120.8" r="8" fill="url(#gHar)"/>
<circle cx="400.4" cy="120.8" r="8" fill="url(#gHar)"/>
<circle cx="434.3" cy="120.8" r="8" fill="url(#gHar)"/>
<path d="M299.6 120.8l-3 7.400a8 8 0 0 0 6 0z" fill="#9a9a9a" opacity=".6"/>
<path d="M299.6 120.8l-7.400 -3a8 8 0 0 0 0 6z" fill="#9a9a9a" opacity=".35"/>
<path d="M299.6 120.8l7.400 -3a8 8 0 0 1 0 6z" fill="#9a9a9a" opacity=".35"/>
<path d="M332.9 120.8l-3 7.400a8 8 0 0 0 6 0z" fill="#9a9a9a" opacity=".6"/>
<path d="M332.9 120.8l-7.400 -3a8 8 0 0 0 0 6z" fill="#9a9a9a" opacity=".35"/>
<path d="M332.9 120.8l7.400 -3a8 8 0 0 1 0 6z" fill="#9a9a9a" opacity=".35"/>
<path d="M366.8 120.8l-3 7.400a8 8 0 0 0 6 0z" fill="#9a9a9a" opacity=".6"/>
<path d="M366.8 120.8l-7.400 -3a8 8 0 0 0 0 6z" fill="#9a9a9a" opacity=".35"/>
<path d="M366.8 120.8l7.400 -3a8 8 0 0 1 0 6z" fill="#9a9a9a" opacity=".35"/>
<path d="M400.4 120.8l-3 7.400a8 8 0 0 0 6 0z" fill="#9a9a9a" opacity=".6"/>
<path d="M400.4 120.8l-7.400 -3a8 8 0 0 0 0 6z" fill="#9a9a9a" opacity=".35"/>
<path d="M400.4 120.8l7.400 -3a8 8 0 0 1 0 6z" fill="#9a9a9a" opacity=".35"/>
<path d="M434.3 120.8l-3 7.400a8 8 0 0 0 6 0z" fill="#9a9a9a" opacity=".6"/>
<path d="M434.3 120.8l-7.400 -3a8 8 0 0 0 0 6z" fill="#9a9a9a" opacity=".35"/>
<path d="M434.3 120.8l7.400 -3a8 8 0 0 1 0 6z" fill="#9a9a9a" opacity=".35"/>
<g transform="translate(265.70 120.80) rotate(0)" opacity="1"><path d="M-.7 -6.500L0 0L.7 -6.500Z" fill="url(#gMk)"/><circle cx="0" cy="-6.600" r="1.750" fill="#cc1f58"/></g>
<g transform="translate(299.60 120.80) rotate(0)" opacity="1"><path d="M-.7 -6.500L0 0L.7 -6.500Z" fill="url(#gMk)"/><circle cx="0" cy="-6.600" r="1.750" fill="#cc1f58"/></g>
<g transform="translate(332.90 120.80) rotate(0)" opacity="1"><path d="M-.7 -6.500L0 0L.7 -6.500Z" fill="url(#gMk)"/><circle cx="0" cy="-6.600" r="1.750" fill="#cc1f58"/></g>
<g transform="translate(366.80 120.80) rotate(-27)" opacity="1"><path d="M-.7 -6.500L0 0L.7 -6.500Z" fill="url(#gMk)"/><circle cx="0" cy="-6.600" r="1.750" fill="#cc1f58"/></g>
<g transform="translate(366.80 120.80) rotate(27)" opacity="1"><path d="M-.7 -6.500L0 0L.7 -6.500Z" fill="url(#gMk)"/><circle cx="0" cy="-6.600" r="1.750" fill="#cc1f58"/></g>
<g transform="translate(400.40 120.80) rotate(-30)" opacity="0.5"><path d="M-.7 -6.500L0 0L.7 -6.500Z" fill="url(#gMk)"/><circle cx="0" cy="-6.600" r="1.750" fill="#5f8f80"/></g>
<g transform="translate(400.40 120.80) rotate(30)" opacity="0.5"><path d="M-.7 -6.500L0 0L.7 -6.500Z" fill="url(#gMk)"/><circle cx="0" cy="-6.600" r="1.750" fill="#5f8f80"/></g>
<g transform="translate(400.40 120.80) rotate(0)" opacity="1"><path d="M-.7 -6.500L0 0L.7 -6.500Z" fill="url(#gMk)"/><circle cx="0" cy="-6.600" r="1.750" fill="#cc1f58"/></g>
<g transform="translate(434.30 120.80) rotate(-30)" opacity="0.4"><path d="M-.7 -6.500L0 0L.7 -6.500Z" fill="url(#gMk)"/><circle cx="0" cy="-6.600" r="1.750" fill="#5f8f80"/></g>
<g transform="translate(434.30 120.80) rotate(30)" opacity="0.4"><path d="M-.7 -6.500L0 0L.7 -6.500Z" fill="url(#gMk)"/><circle cx="0" cy="-6.600" r="1.750" fill="#5f8f80"/></g>
<g transform="translate(434.30 120.80) rotate(0)" opacity="1"><path d="M-.7 -6.500L0 0L.7 -6.500Z" fill="url(#gMk)"/><circle cx="0" cy="-6.600" r="1.750" fill="#cc1f58"/></g>
<text x="260.70" y="135.90" font-size="4.2" fill="#f4f4f4" textLength="9.90" lengthAdjust="spacingAndGlyphs" font-weight="bold" >Mono</text>
<text x="285.00" y="135.90" font-size="4.2" fill="#858585" textLength="28.80" lengthAdjust="spacingAndGlyphs" >Complementary</text>
<text x="329.00" y="135.90" font-size="4.2" fill="#858585" textLength="8.40" lengthAdjust="spacingAndGlyphs" >Triad</text>
<text x="361.00" y="135.90" font-size="4.2" fill="#858585" textLength="11.90" lengthAdjust="spacingAndGlyphs" >Tetrad</text>
<text x="392.90" y="135.90" font-size="4.2" fill="#858585" textLength="14.90" lengthAdjust="spacingAndGlyphs" >Analogic</text>
<text x="426.60" y="135.90" font-size="4.2" fill="#858585" textLength="16.50" lengthAdjust="spacingAndGlyphs" >Accented</text>
<foreignObject x="302.30" y="146.90" width="96.40" height="96.40"><div style="margin:1px;width:94.40px;height:94.40px;border-radius:50%;background:radial-gradient(circle closest-side,rgba(76,72,72,.95) 0%,rgba(80,78,78,.5) 38%,rgba(80,80,80,0) 95%),conic-gradient(#af0808 0%,#a83200 10%,#997200 20%,#939300 27%,#809300 40%,#499300 46%,#0e9319 51%,#008e6b 57%,#007f99 62%,#072d9e 68%,#1a0f99 76%,#71179e 82.5%,#9410a0 88%,#a80858 94%,#af0808 100%)"></div></foreignObject>
<circle cx="350.5" cy="195.1" r="47.7" fill="none" stroke="#ffffff" stroke-width="2"/>
<line x1="325.60" y1="182.40" x2="350.50" y2="195.10" stroke="#2c2236" stroke-width="0.6" />
<circle cx="323.500" cy="181.300" r="2.200" fill="none" stroke="#ffffff" stroke-width=".9"/>
<rect x="413.00" y="150.80" width="4.70" height="90.70" fill="url(#gBr)" />
<line x1="412.00" y1="214.80" x2="418.60" y2="214.80" stroke="#ffffff" stroke-width="0.8" />
<path d="M411.600 214.800l1.600-1.200v2.400zM419 214.800l-1.600-1.200v2.400z" fill="#fff"/>
<rect x="252.80" y="252.60" width="29.00" height="10.50" fill="#d6d6d6" rx=".8"/>
<text x="259.80" y="259.85" font-size="5.3" fill="#1a1a1a" textLength="14.60" lengthAdjust="spacingAndGlyphs" >Wheel</text>
<rect x="286.60" y="252.60" width="28.80" height="10.50" fill="#383838" rx=".8"/>
<text x="294.00" y="259.85" font-size="5.3" fill="#e2e2e2" textLength="12.80" lengthAdjust="spacingAndGlyphs" >Slider</text>
<text x="386.40" y="259.25" font-size="4.9" fill="#f0f0f0" textLength="12.20" lengthAdjust="spacingAndGlyphs" >HTML</text>
<rect x="407.50" y="253.80" width="25.30" height="7.80" fill="#282828" />
<text x="408.80" y="259.35" font-size="4.9" fill="#bcbcbc" textLength="18.80" lengthAdjust="spacingAndGlyphs" >#61177c</text>
<rect x="252.80" y="275.30" width="11.90" height="12.50" fill="#61177c" stroke="#f0ecf2" stroke-width="1.1"/>
<rect x="267.20" y="275.00" width="11.80" height="13.30" fill="#2b2b2b" stroke="#484848" stroke-width=".7"/>
<rect x="281.40" y="275.00" width="12.00" height="13.30" fill="#2b2b2b" stroke="#484848" stroke-width=".7"/>
<rect x="296.50" y="275.00" width="12.80" height="13.30" fill="#2b2b2b" stroke="#484848" stroke-width=".7"/>
<rect x="252.30" y="293.30" width="50.00" height="10.20" fill="url(#gBtn)" rx=".8"/>
<text x="261.40" y="300.45" font-size="4.9" fill="#e0e0e0" textLength="30.60" lengthAdjust="spacingAndGlyphs" >Add to Palette</text>
<line x1="374.70" y1="273.00" x2="374.70" y2="306.00" stroke="#242424" stroke-width="0.8" />
<rect x="386.40" y="275.00" width="12.80" height="12.90" fill="url(#gPlus)" rx=".6"/>
<path d="M389.800 281.500h6.200M392.900 278.400v6.200" stroke="#1e1e1e" stroke-width="1.300"/>
<rect x="405.70" y="274.50" width="19.10" height="19.20" fill="#61177c" stroke="#dccfe4" stroke-width=".9"/>
<rect x="429.80" y="274.50" width="19.00" height="19.20" fill="#61177c" stroke="#dccfe4" stroke-width=".9"/>
<text x="405.90" y="302.75" font-size="4.9" fill="#e6e6e6" textLength="16.90" lengthAdjust="spacingAndGlyphs" >Current</text>
<text x="430.30" y="302.75" font-size="4.9" fill="#e6e6e6" textLength="18.90" lengthAdjust="spacingAndGlyphs" >Previous</text>
<text x="254.70" y="320.85" font-size="4.9" fill="#e6e6e6" textLength="10.30" lengthAdjust="spacingAndGlyphs" >Help</text>
<line x1="254.70" y1="321.60" x2="265.00" y2="321.60" stroke="#d6d6d6" stroke-width="0.5" />
<rect x="373.20" y="313.80" width="36.30" height="10.30" fill="url(#gBtn)" rx=".8"/>
<text x="386.20" y="321.00" font-size="5.3" fill="#e6e6e6" textLength="8.20" lengthAdjust="spacingAndGlyphs" >OK</text>
<rect x="412.80" y="313.80" width="36.40" height="10.30" fill="url(#gBtn)" rx=".8"/>
<text x="423.00" y="321.00" font-size="5.3" fill="#e6e6e6" textLength="15.00" lengthAdjust="spacingAndGlyphs" >Cancel</text>
</svg>
</body></html>
